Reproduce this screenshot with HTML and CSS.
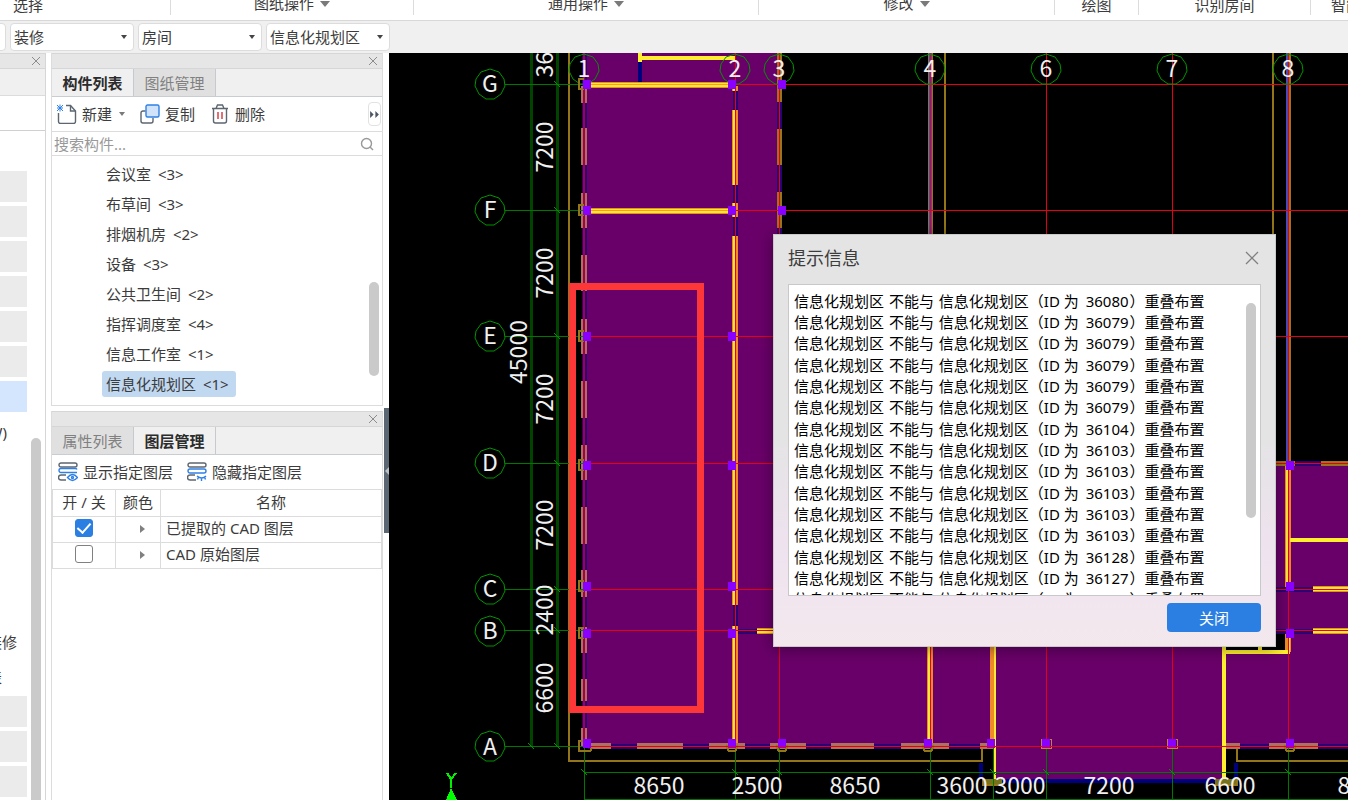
FILE: index.html
```html
<!DOCTYPE html>
<html lang="zh-CN">
<head>
    <meta charset="UTF-8">
    <meta name="viewport" content="width=device-width, initial-scale=1.0">
    <title>构件列表</title>
    <link rel="stylesheet" href="styles.css">
</head>
<body>
    <!-- Ribbon group captions -->
    <header class="ribbon">
        <div class="group group-select low">选择</div>
        <div class="group">图纸操作 <i class="caret"></i></div>
        <div class="group">通用操作 <i class="caret"></i></div>
        <div class="group">修改 <i class="caret"></i></div>
        <div class="group low">绘图</div>
        <div class="group low">识别房间</div>
        <div class="group group-smart low">智能</div>
    </header>

    <div class="filters">
        <div class="picker picker-floor"><select aria-label="楼层"><option></option></select></div>
        <div class="picker"><select aria-label="分类"><option>装修</option></select></div>
        <div class="picker"><select aria-label="类型"><option>房间</option></select></div>
        <div class="picker"><select aria-label="构件"><option>信息化规划区</option></select></div>
    </div>

    <main class="workspace">
        <nav class="modules">
            <div class="titlebar">
                <button class="close" aria-label="关闭导航"><svg viewBox="0 0 10 10"><path d="M1 1l8 8M9 1l-8 8"/></svg></button>
            </div>
            <div class="modules-head"></div>
            <div class="modules-tools"></div>
            <ul class="module-list">
                <li class="head"></li>
                <li class="head"></li>
                <li class="head"></li>
                <li class="head"></li>
                <li class="head"></li>
                <li class="head"></li>
                <li class="head current"></li>
                <li class="short">(W)</li>
                <li></li>
                <li></li>
                <li></li>
                <li></li>
                <li></li>
                <li class="long">装修</li>
                <li class="tiny">表</li>
                <li class="head"></li>
                <li class="head"></li>
                <li class="head"></li>
            </ul>
            <span class="thumb modules-thumb"></span>
        </nav>

        <div class="docks">
            <section class="dock dock-components">
                <div class="titlebar">
                    <button class="close" aria-label="关闭构件列表"><svg viewBox="0 0 10 10"><path d="M1 1l8 8M9 1l-8 8"/></svg></button>
                </div>
                <div class="tabs">
                    <button class="tab active">构件列表</button>
                    <button class="tab">图纸管理</button>
                </div>
                <div class="toolbar">
                    <button class="tool">
                        <svg class="icon" viewBox="0 0 20 20" stroke-width="1.4">
                            <path class="ink" d="M1.500 9v8.500a2 2 0 0 0 2 2h13a2 2 0 0 0 2-2V7l-5-5.500H9"/>
                            <path class="ink" d="M13.500 1.500V7h5"/>
                            <path class="blue" d="M0 1l6 6M6 1l-6 6M3 0.500v7M0 4h6" stroke-width="1"/>
                        </svg>
                        新建 <i class="caret small"></i>
                    </button>
                    <button class="tool">
                        <svg class="icon" viewBox="0 0 20 20" stroke-width="1.4">
                            <path class="ink" d="M5.500 7H3a2 2 0 0 0-2 2v8a2 2 0 0 0 2 2h8a2 2 0 0 0 2-2v-3"/>
                            <rect class="blue tint" x="6" y="1" width="13" height="12" rx="1.500"/>
                        </svg>
                        复制
                    </button>
                    <button class="tool">
                        <svg class="icon" viewBox="0 0 20 20" stroke-width="1.4">
                            <path class="ink" d="M2 4.500h16M6 4.500l1.500-3.500h5L14 4.500M3.500 4.500V17a2 2 0 0 0 2 2h9a2 2 0 0 0 2-2V4.500"/>
                            <path class="red" d="M8 8v7M12 8v7"/>
                        </svg>
                        删除
                    </button>
                    <button class="more" aria-label="更多"><svg viewBox="0 0 10 8"><path d="M0 0l4 4-4 4zM6 0l4 4-4 4z"/></svg></button>
                </div>
                <div class="search">
                    <input type="text" placeholder="搜索构件..." aria-label="搜索构件">
                    <svg viewBox="0 0 14 14" stroke-width="1.4"><circle cx="6.500" cy="6.500" r="5"/><path d="M10 10l3 3"/></svg>
                </div>
                <ul class="tree">
                    <li><span>会议室 <i class="count">&lt;3&gt;</i></span></li>
                    <li><span>布草间 <i class="count">&lt;3&gt;</i></span></li>
                    <li><span>排烟机房 <i class="count">&lt;2&gt;</i></span></li>
                    <li><span>设备 <i class="count">&lt;3&gt;</i></span></li>
                    <li><span>公共卫生间 <i class="count">&lt;2&gt;</i></span></li>
                    <li><span>指挥调度室 <i class="count">&lt;4&gt;</i></span></li>
                    <li><span>信息工作室 <i class="count">&lt;1&gt;</i></span></li>
                    <li><span class="selected">信息化规划区 <i class="count">&lt;1&gt;</i></span></li>
                </ul>
                <span class="thumb tree-thumb"></span>
            </section>

            <section class="dock dock-layers">
                <div class="titlebar">
                    <button class="close" aria-label="关闭图层管理"><svg viewBox="0 0 10 10"><path d="M1 1l8 8M9 1l-8 8"/></svg></button>
                </div>
                <div class="tabs">
                    <button class="tab">属性列表</button>
                    <button class="tab active">图层管理</button>
                </div>
                <div class="toolbar layer-tools">
                    <button class="tool">
                        <svg class="icon" viewBox="0 0 20 20" stroke-width="1.4">
                            <rect class="ink" x="1" y="1" width="18" height="4" rx="2"/>
                            <path class="blue" d="M19 10.500H3a2 2 0 0 1 0-4h14a2 2 0 0 1 2 1"/>
                            <path class="ink" d="M8 13H3a2 2 0 0 0 0 5h5"/>
                            <path class="blue" d="M9.500 15.500q5-6 10 0q-5 6-10 0z"/>
                            <circle class="blue" cx="14.500" cy="15.500" r="1"/>
                        </svg>
                        显示指定图层
                    </button>
                    <button class="tool">
                        <svg class="icon" viewBox="0 0 20 20" stroke-width="1.4">
                            <rect class="ink" x="1" y="1" width="18" height="4" rx="2"/>
                            <rect class="blue" x="1" y="7" width="18" height="4" rx="2"/>
                            <path class="ink" d="M8 13H3a2 2 0 0 0 0 5h6"/>
                            <path class="blue" d="M10 14q5 4 9 0M11.500 15l-1 2.500M14.500 16v3M17.500 15l1 2.500"/>
                        </svg>
                        隐藏指定图层
                    </button>
                </div>
                <table class="layers">
                    <thead>
                        <tr><th class="col-toggle">开 / 关</th><th class="col-color">颜色</th><th>名称</th></tr>
                    </thead>
                    <tbody>
                        <tr>
                            <td class="center"><input type="checkbox" id="layer-extracted" checked></td>
                            <td class="center"><i class="branch"></i></td>
                            <td><label for="layer-extracted">已提取的 CAD 图层</label></td>
                        </tr>
                        <tr>
                            <td class="center"><input type="checkbox" id="layer-original"></td>
                            <td class="center"><i class="branch"></i></td>
                            <td><label for="layer-original">CAD 原始图层</label></td>
                        </tr>
                    </tbody>
                </table>
            </section>
        </div>

        <div class="gutter">
            <button class="collapse" aria-label="收起面板"><svg viewBox="0 0 5 8"><path d="M5 0v8L1 4z"/></svg></button>
        </div>

        <div class="canvas">
            <svg class="plan" viewBox="389 53 959 747" preserveAspectRatio="xMinYMin slice">
                <defs>
                    <path id="bubble" d="M0-15L9-12L14-5L15 2L11 10L4 15H-4L-11 10L-15 2L-14-5L-9-12Z"/>
                    <rect id="col" x="-4" y="-4" width="8" height="9"/>
                    <path id="base" d="M-3-5H-8V5H-3"/>
                    <path id="foot" d="M-5 2V5L-3 8H3L5 5V2"/>
                    <path id="tick" d="M-3-3L3 3"/>
                </defs>

                <!-- floor areas -->
                <path class="floor" d="M586 53H780V462H1348V746H1224V780H995V746H586Z"/>
                <path d="M1226 632H1286V651H1226Z"/>

                <!-- outline of the slab -->
                <g class="slab">
                    <path d="M569 53V761H982V747"/>
                    <path d="M1237 747V761H1348"/>
                    <path d="M945 53V240M1273 53V240"/>
                </g>
                <path class="beam" d="M981 763V779M1236 763V779M995 781H1224"/>

                <!-- left wall -->
                <path class="wall-navy" d="M584 53V746"/>
                <path class="wall-tan" d="M584 86V103M584 128V165M584 193V228M584 255V291M584 319V354M584 381V418M584 445V480M584 507V544M584 570V597M584 627V653M584 679V701M584 728V746"/>
                <path class="wall-core" d="M584 53V746"/>

                <!-- wall on axis 2 -->
                <path class="wall-navy" d="M735 86V746"/>
                <path class="wall-edge" d="M735 86V91M735 110V185M735 203V217M735 236V605M735 626V746"/>
                <path class="wall-yellow" d="M734 86V91M734 110V185M734 203V217M734 236V605M734 626V746"/>

                <!-- wall on axis 3 -->
                <path class="wall-navy" d="M779 53V240"/>
                <path class="wall-ochre" d="M779 53V102M779 129V165M779 192V228"/>

                <!-- cross walls -->
                <path class="wall-edge" d="M590 85H728M590 211H728"/>
                <path class="wall-solid" d="M590 85H728M590 211H728"/>
                <path class="wall-line" d="M590 84H728M590 210H728"/>
                <path class="wall-solid" d="M640 62V53M638 58H735"/>
                <path class="beam" d="M640 62V82"/>
                <path class="wall-navy" d="M738 631H757"/>
                <path class="wall-edge" d="M757 631H780"/>
                <path class="wall-solid" d="M757 631H780"/>

                <!-- walls on axes 4 and 8 -->
                <path class="wall-ochre" d="M930 53V240M1288 53V462"/>
                <path class="wall-blue" d="M930 53V240M1287 53V462"/>
                <path class="wall-edge" d="M930 640V746M993 640V746M1288 466V590M1288 632V652"/>
                <path class="wall-yellow" d="M929 640V746M1287 466V590M1289 632V652"/>
                <path class="wall-yellow" d="M995 640V780"/>
                <path class="wall-solid" d="M1224 640V780M1226 652H1290M1260 640V652M1290 540H1348"/>
                <path class="wall-ochre" d="M1276 463H1295M1321 463H1348"/>
                <path class="wall-navy" d="M1295 463H1321M1276 589H1313M1276 631H1313"/>
                <path class="wall-edge" d="M1313 589H1348M1313 631H1348"/>
                <path class="wall-solid" d="M1313 589H1348M1313 631H1348"/>

                <!-- bottom wall -->
                <path class="wall-navy" d="M588 746H990M1226 746H1348"/>
                <path class="wall-tan" d="M591 746H611M637 746H683M709 746H745M770 746H806M831 746H874M901 746H949M980 746H993M1226 746H1240M1269 746H1318"/>
                <path class="pad" d="M983 782H1002M1215 782H1237"/>
                <path class="slab" d="M983 779V785H1002M1215 785H1237V779"/>

                <!-- red axes -->
                <g class="axis">
                    <path d="M736 84H1348M736 210H1348M584 336H1348M584 463H1348M584 589H1348M584 630H1348M584 746H1348"/>
                    <path d="M735 53V746M779 53V746M930 53V746M1046 53V746M1172 53V746M1288 53V746"/>
                </g>

                <!-- green dimension lines -->
                <path class="dim-dark" d="M531 53V746M557 53V746"/>
                <path class="dim" d="M505 84H584M505 210H584M505 336H584M505 463H584M505 589H584M505 630H584M505 746H584"/>
                <path class="dim" d="M584 772H1348M584 799H1348M584 746V800M735 746V800M779 746V800M930 746V800M993 746V800M1046 746V800M1172 746V800M1288 746V800"/>
                <g class="dim marks">
                    <use href="#tick" x="557" y="84"/><use href="#tick" x="557" y="210"/><use href="#tick" x="557" y="336"/>
                    <use href="#tick" x="557" y="463"/><use href="#tick" x="557" y="589"/><use href="#tick" x="557" y="630"/>
                    <use href="#tick" x="557" y="746"/><use href="#tick" x="531" y="746"/>
                    <use href="#tick" x="584" y="772"/><use href="#tick" x="735" y="772"/><use href="#tick" x="779" y="772"/>
                    <use href="#tick" x="930" y="772"/><use href="#tick" x="993" y="772"/><use href="#tick" x="1046" y="772"/>
                    <use href="#tick" x="1172" y="772"/><use href="#tick" x="1288" y="772"/>
                </g>
                <g class="dim marks">
                    <use href="#bubble" x="490" y="84"/><use href="#bubble" x="490" y="210"/><use href="#bubble" x="490" y="336"/>
                    <use href="#bubble" x="490" y="463"/><use href="#bubble" x="490" y="589"/><use href="#bubble" x="490" y="631"/>
                    <use href="#bubble" x="490" y="746"/>
                    <use href="#bubble" x="584" y="69"/><use href="#bubble" x="735" y="69"/><use href="#bubble" x="779" y="69"/>
                    <use href="#bubble" x="930" y="69"/><use href="#bubble" x="1046" y="69"/><use href="#bubble" x="1172" y="69"/>
                    <use href="#bubble" x="1288" y="69"/>
                </g>

                <!-- columns -->
                <g class="slab">
                    <use href="#base" x="587" y="84"/><use href="#base" x="587" y="210"/><use href="#base" x="587" y="336"/>
                    <use href="#base" x="587" y="465"/><use href="#base" x="587" y="586"/><use href="#base" x="587" y="633"/>
                    <path d="M584 741H579V751H590L592 748"/>
                    <use href="#foot" x="732" y="743"/><use href="#foot" x="782" y="743"/><use href="#foot" x="928" y="743"/>
                    <use href="#foot" x="1290" y="743"/>
                </g>
                <path class="frame" d="M1041 739H1051V748H1041ZM1167 739H1177V748H1167Z"/>
                <g class="columns">
                    <use href="#col" x="587" y="84"/><use href="#col" x="587" y="210"/><use href="#col" x="587" y="336"/>
                    <use href="#col" x="587" y="465"/><use href="#col" x="587" y="586"/><use href="#col" x="587" y="633"/>
                    <use href="#col" x="587" y="743"/>
                    <use href="#col" x="732" y="84"/><use href="#col" x="732" y="210"/><use href="#col" x="732" y="336"/>
                    <use href="#col" x="732" y="465"/><use href="#col" x="732" y="586"/><use href="#col" x="732" y="633"/>
                    <use href="#col" x="732" y="743"/>
                    <use href="#col" x="782" y="84"/><use href="#col" x="782" y="210"/>
                    <use href="#col" x="782" y="743"/><use href="#col" x="928" y="743"/><use href="#col" x="991" y="743"/>
                    <use href="#col" x="1046" y="743"/><use href="#col" x="1172" y="743"/><use href="#col" x="1290" y="743"/>
                    <use href="#col" x="1290" y="465"/><use href="#col" x="1290" y="586"/><use href="#col" x="1290" y="633"/>
                </g>
                <path class="axis" d="M592 746H1348"/>

                <g class="label">
                    <text x="490" y="92">G</text>
                    <text x="490" y="218">F</text>
                    <text x="490" y="344">E</text>
                    <text x="490" y="471">D</text>
                    <text x="490" y="597">C</text>
                    <text x="490" y="639">B</text>
                    <text x="490" y="755">A</text>
                    <text x="584" y="77">1</text>
                    <text x="735" y="77">2</text>
                    <text x="779" y="77">3</text>
                    <text x="930" y="77">4</text>
                    <text x="1046" y="77">6</text>
                    <text x="1172" y="77">7</text>
                    <text x="1288" y="77">8</text>
                    <text x="659" y="794">8650</text>
                    <text x="757" y="794">2500</text>
                    <text x="855" y="794">8650</text>
                    <text x="962" y="794">3600</text>
                    <text x="1020" y="794">3000</text>
                    <text x="1109" y="794">7200</text>
                    <text x="1230" y="794">6600</text>
                    <text x="1363" y="794">8400</text>
                    <text transform="translate(553 52) rotate(-90)">3600</text>
                    <text transform="translate(553 147) rotate(-90)">7200</text>
                    <text transform="translate(553 273) rotate(-90)">7200</text>
                    <text transform="translate(553 399) rotate(-90)">7200</text>
                    <text transform="translate(553 525) rotate(-90)">7200</text>
                    <text transform="translate(553 610) rotate(-90)">2400</text>
                    <text transform="translate(553 688) rotate(-90)">6600</text>
                    <text transform="translate(527 352) rotate(-90)">45000</text>
                </g>

                <!-- origin marker -->
                <path class="origin-y" d="M447 773L451 779L456 773M451 779V788"/>
                <path class="origin" d="M451 788L446 800H457Z"/>

                <rect class="highlight" x="572" y="286" width="128" height="423"/>
            </svg>

            <section class="dialog" role="dialog" aria-labelledby="dialog-title">
                <header class="dialog-head">
                    <h2 id="dialog-title">提示信息</h2>
                    <button class="dialog-x" aria-label="关闭提示"><svg viewBox="0 0 14 14" stroke-width="1.3"><path d="M1 1l12 12M13 1l-12 12"/></svg></button>
                </header>
                <div class="log">
                    <ul>
                        <li>信息化规划区 <span class="verb">不能与</span> 信息化规划区（ID 为 <span class="id">36080</span>）重叠布置</li>
                        <li>信息化规划区 <span class="verb">不能与</span> 信息化规划区（ID 为 <span class="id">36079</span>）重叠布置</li>
                        <li>信息化规划区 <span class="verb">不能与</span> 信息化规划区（ID 为 <span class="id">36079</span>）重叠布置</li>
                        <li>信息化规划区 <span class="verb">不能与</span> 信息化规划区（ID 为 <span class="id">36079</span>）重叠布置</li>
                        <li>信息化规划区 <span class="verb">不能与</span> 信息化规划区（ID 为 <span class="id">36079</span>）重叠布置</li>
                        <li>信息化规划区 <span class="verb">不能与</span> 信息化规划区（ID 为 <span class="id">36079</span>）重叠布置</li>
                        <li>信息化规划区 <span class="verb">不能与</span> 信息化规划区（ID 为 <span class="id">36104</span>）重叠布置</li>
                        <li>信息化规划区 <span class="verb">不能与</span> 信息化规划区（ID 为 <span class="id">36103</span>）重叠布置</li>
                        <li>信息化规划区 <span class="verb">不能与</span> 信息化规划区（ID 为 <span class="id">36103</span>）重叠布置</li>
                        <li>信息化规划区 <span class="verb">不能与</span> 信息化规划区（ID 为 <span class="id">36103</span>）重叠布置</li>
                        <li>信息化规划区 <span class="verb">不能与</span> 信息化规划区（ID 为 <span class="id">36103</span>）重叠布置</li>
                        <li>信息化规划区 <span class="verb">不能与</span> 信息化规划区（ID 为 <span class="id">36103</span>）重叠布置</li>
                        <li>信息化规划区 <span class="verb">不能与</span> 信息化规划区（ID 为 <span class="id">36128</span>）重叠布置</li>
                        <li>信息化规划区 <span class="verb">不能与</span> 信息化规划区（ID 为 <span class="id">36127</span>）重叠布置</li>
                        <li>信息化规划区 <span class="verb">不能与</span> 信息化规划区（ID 为 <span class="id">36127</span>）重叠布置</li>
                    </ul>
                    <span class="thumb log-thumb"></span>
                </div>
                <footer class="dialog-foot">
                    <button class="primary">关闭</button>
                </footer>
            </section>
        </div>
    </main>
</body>
</html>
```
FILE: styles.css
```css
* {
    box-sizing: border-box;
}

body {
    margin: 0;
    height: 100vh;
    display: flex;
    flex-direction: column;
    overflow: hidden;
    background-color: #fff;
    color: #3c3c3c;
    font-family: "Noto Sans", "Noto Sans CJK SC", sans-serif;
    font-size: 15px;
    line-height: 20px;
}

button, input, select {
    font: inherit;
    color: inherit;
    margin: 0;
    padding: 0;
    border: 0;
    background: none;
}

ul {
    list-style: none;
    margin: 0;
    padding: 0;
}

svg {
    display: block;
}

/* Ribbon */
.ribbon {
    display: grid;
    grid-template-columns: 171fr 243fr 345fr 296fr 84fr 172fr 37fr;
    height: 20px;
    flex: none;
    overflow: hidden;
    white-space: nowrap;
}

.group {
    display: flex;
    justify-content: center;
    align-items: flex-end;
    gap: 3px;
    height: 15px;
    min-width: 0;
    padding-bottom: 2px;
    border-right: 1px solid #dcdcdc;
}

.group.low {
    padding-bottom: 0;
}

.group-select {
    justify-content: flex-start;
    padding-left: 13px;
}

.group-smart {
    justify-content: flex-start;
    padding-left: 20px;
    border-right: 0;
}

.caret {
    border: 5px solid transparent;
    border-top: 6px solid #7a7a7a;
    border-bottom: 0;
}

.group .caret {
    margin: 0 0 6px 3px;
}

.caret.small {
    border-width: 4px 3px 0;
    margin-left: 2px;
}

/* Filter bar */
.filters {
    display: flex;
    flex: none;
    gap: 4px;
    height: 33px;
    padding-top: 2px;
    background-color: #f0f0f0;
    border-top: 1px solid #d8d8d8;
}

.picker {
    position: relative;
    width: 124px;
    height: 28px;
}

.picker-floor {
    margin-left: -118px;
}

.picker select {
    appearance: none;
    width: 100%;
    height: 100%;
    padding-left: 3px;
    background-color: #fff;
    border: 1px solid #dcdcdc;
    border-radius: 4px;
}

.picker::after {
    content: "";
    position: absolute;
    right: 7px;
    top: 12px;
    border: 3px solid transparent;
    border-top: 4px solid #444;
    border-bottom: 0;
}

/* Workspace */
.workspace {
    display: flex;
    flex: 1;
    min-height: 0;
}

.titlebar {
    display: flex;
    justify-content: flex-end;
    align-items: center;
    height: 16px;
    flex: none;
    padding-right: 4px;
    background-color: #e6e6e6;
    border-top: 1px solid #d4d6d8;
    border-bottom: 1px solid #d4d6d8;
}

.close {
    width: 10px;
    height: 10px;
}

.close path {
    stroke: #8c8c8c;
    fill: none;
}

.thumb {
    position: absolute;
    width: 10px;
    border-radius: 5px;
    background-color: #cacaca;
}

.modules {
    position: relative;
    width: 46px;
    flex: none;
    overflow: hidden;
    border-right: 1px solid #d4d6d8;
}

.modules-head {
    height: 27px;
    background-color: #f0f0f0;
    border-bottom: 1px solid #dcdcdc;
}

.modules-tools {
    height: 35px;
    border-bottom: 1px solid #d0d0d0;
}

.module-list {
    display: flex;
    flex-direction: column;
    gap: 4px;
    width: 27px;
    padding-top: 40px;
    white-space: nowrap;
}

.module-list li {
    display: flex;
    flex: none;
    justify-content: flex-end;
    align-items: center;
    height: 31px;
}

.module-list .head { background-color: #ebebeb; }
.module-list .current { background-color: #d3e6fd; }
.module-list .short { padding-right: 20px; }
.module-list .long { padding-right: 10px; }
.module-list .tiny { padding-right: 25px; }

.modules-thumb {
    right: 4px;
    top: 385px;
    bottom: -10px;
}

/* Docked panels */
.docks {
    display: flex;
    flex-direction: column;
    gap: 5px;
    width: 332px;
    flex: none;
    margin-left: 5px;
}

.dock {
    position: relative;
    display: flex;
    flex-direction: column;
    border: 1px solid #dcdcdc;
    border-top: 0;
}

.dock-components {
    height: 353px;
    flex: none;
}

.dock-layers {
    flex: 1;
    border-bottom: 0;
}

.tabs {
    display: flex;
    height: 28px;
    flex: none;
    background-color: #f0f0f0;
    border-bottom: 1px solid #c8cdd2;
}

.tab {
    width: 82px;
    background-color: #e0e0e0;
    border-right: 1px solid #c4cad0;
    color: #808080;
}

.tab.active {
    background-color: #f0f0f0;
    color: #2c2c2c;
    font-weight: bold;
}

.toolbar {
    display: flex;
    align-items: center;
    gap: 15px;
    height: 35px;
    flex: none;
    padding: 0 1px 0 5px;
    border-bottom: 1px solid #dcdcdc;
}

.tool {
    display: flex;
    align-items: center;
    gap: 5px;
    white-space: nowrap;
}

.icon {
    width: 20px;
    height: 20px;
}

.icon .ink { fill: none; stroke: #5c6670; }
.icon .blue { fill: none; stroke: #2f80e6; }
.icon .red { fill: none; stroke: #d8323c; }
.icon .tint { fill: #d0e3fb; }

.more {
    display: flex;
    align-items: center;
    justify-content: center;
    width: 13px;
    height: 24px;
    margin-left: auto;
    border: 1px solid #e2e2e2;
    border-radius: 4px;
}

.more svg {
    width: 9px;
    height: 7px;
    flex: none;
    fill: #4c5560;
}

.search {
    display: flex;
    align-items: center;
    height: 24px;
    flex: none;
    padding: 0 8px 0 2px;
    border-bottom: 1px solid #dcdcdc;
}

.search input {
    flex: 1;
    min-width: 0;
    outline: 0;
}

.search input::placeholder {
    color: #999;
}

.search svg {
    width: 14px;
    height: 14px;
    fill: none;
    stroke: #999;
}

.tree {
    padding: 3px 0 0 50px;
}

.tree li {
    display: flex;
    align-items: center;
    height: 30px;
}

.tree span {
    padding: 3px 7px 3px 4px;
    border-radius: 3px;
}

.tree .count {
    margin-left: 3px;
    font-style: normal;
}

.tree .selected {
    background-color: #c1d8f1;
}

.tree-thumb {
    right: 3px;
    bottom: 29px;
    height: 94px;
}

.layer-tools {
    gap: 14px;
    padding-left: 6px;
}

.layers {
    width: 100%;
    border-collapse: collapse;
    table-layout: fixed;
}

.layers th, .layers td {
    height: 26px;
    padding: 0 5px 2px;
    border: 1px solid #dcdcdc;
    border-top: 0;
    font-weight: normal;
    text-align: left;
    white-space: nowrap;
}

.layers th, .layers .center {
    text-align: center;
}

.layers th { padding: 0 0 2px; }
.col-toggle { width: 63px; }
.col-color { width: 45px; }

.layers input {
    display: block;
    appearance: none;
    width: 18px;
    height: 18px;
    margin: 0 auto;
    border: 1px solid #808080;
    border-radius: 3px;
    background-color: #fff;
}

.layers input:checked {
    background-color: #2b7fe3;
    border-color: #2b7fe3;
}

.layers input:checked::after {
    content: "";
    display: block;
    width: 6px;
    height: 11px;
    margin: 0 auto;
    border: solid #fff;
    border-width: 0 2px 2px 0;
    transform: rotate(42deg);
}

.branch {
    display: inline-block;
    margin-left: 8px;
    border: 4px solid transparent;
    border-left: 5px solid #808080;
    border-right: 0;
    vertical-align: 1px;
}

.gutter {
    width: 6px;
    flex: none;
    padding: 355px 0 0 1px;
}

.collapse {
    display: flex;
    align-items: center;
    width: 5px;
    height: 125px;
    background-color: #5b6873;
}

.collapse svg {
    width: 5px;
    height: 8px;
    fill: #b8c0c8;
}

/* Drawing */
.canvas {
    position: relative;
    flex: 1;
    min-width: 0;
    overflow: hidden;
    background-color: #000;
}

.plan {
    width: 100%;
    height: 100%;
    fill: none;
    shape-rendering: crispEdges;
}

.plan path { fill: #000; }
.plan [class^="wall"], .plan .beam, .plan .pad, .plan .slab, .plan .slab path,
.plan .axis, .plan .axis path, .plan .dim, .plan .dim-dark, .plan #tick,
.plan #bubble, .plan #base, .plan #foot, .plan .origin-y, .plan .frame { fill: none; }

.plan .floor { fill: #690069; }
.slab { stroke: #93761a; stroke-width: 2; }
.frame { stroke: #c08048; stroke-width: 1; }
.beam { stroke: #00007c; stroke-width: 4; }
.pad { stroke: #77721c; stroke-width: 6; }
.wall-navy { stroke: #2a0072; stroke-width: 5; }
.wall-tan { stroke: #b0705e; stroke-width: 6; }
.wall-core { stroke: #a0004c; stroke-width: 2; }
.wall-edge { stroke: #f08a28; stroke-width: 6; }
.wall-yellow { stroke: #ffe838; stroke-width: 2; }
.wall-solid { stroke: #ffee30; stroke-width: 4; }
.wall-line { stroke: #ff9a28; stroke-width: 1; }
.wall-ochre { stroke: #9c7420; stroke-width: 5; }
.wall-blue { stroke: #5048b8; stroke-width: 3; }
.axis { stroke: #e60012; stroke-width: 1; }
.dim { stroke: #007800; stroke-width: 1; }
.dim.marks { stroke: #009400; shape-rendering: auto; }
.dim-dark { stroke: #004400; stroke-width: 3; }
.columns { fill: #8a00ff; }
.origin-y { stroke: #00f000; stroke-width: 2; }
.plan .origin { fill: #00ff00; }
.highlight { stroke: #fd3737; stroke-width: 7; }

.label {
    fill: #f0f0f0;
    font-family: "Noto Sans CJK SC", sans-serif;
    font-size: 23px;
    text-anchor: middle;
}

/* Message window over the drawing */
.dialog {
    position: absolute;
    left: 384px;
    top: 181px;
    width: 503px;
    padding: 0 14px 14px;
    border: 1px solid #c8ccc8;
    background: linear-gradient(#e4e4e4 48%, #eee2ef 75%, #f1e6ef 88%, #f2e8ec);
    box-shadow: 0 2px 14px rgba(0, 0, 0, 0.4);
}

.dialog-head {
    display: flex;
    align-items: center;
    justify-content: space-between;
    height: 49px;
    padding-bottom: 3px;
}

.dialog-head h2 {
    margin: 0;
    font-size: 18px;
    font-weight: normal;
}

.dialog-x {
    width: 14px;
    height: 14px;
    margin-right: 2px;
}

.dialog-x path {
    stroke: #808080;
    fill: none;
}

.log {
    position: relative;
    height: 312px;
    padding: 5px;
    overflow: hidden;
    background-color: #fff;
    border: 1px solid #c8c8c8;
    color: #000;
    white-space: nowrap;
}

.log ul {
    display: grid;
    grid-auto-rows: 1fr;
    align-items: center;
    height: 320px;
}

.log .verb {
    margin: 0 1px;
}

.log .id {
    margin: 0 1px 0 3px;
}

.log-thumb {
    right: 4px;
    top: 18px;
    height: 215px;
}

.dialog-foot {
    display: flex;
    justify-content: flex-end;
    padding-top: 7px;
}

.primary {
    width: 94px;
    height: 29px;
    border-radius: 4px;
    background-color: #2b7fe3;
    color: #fff;
}
```
